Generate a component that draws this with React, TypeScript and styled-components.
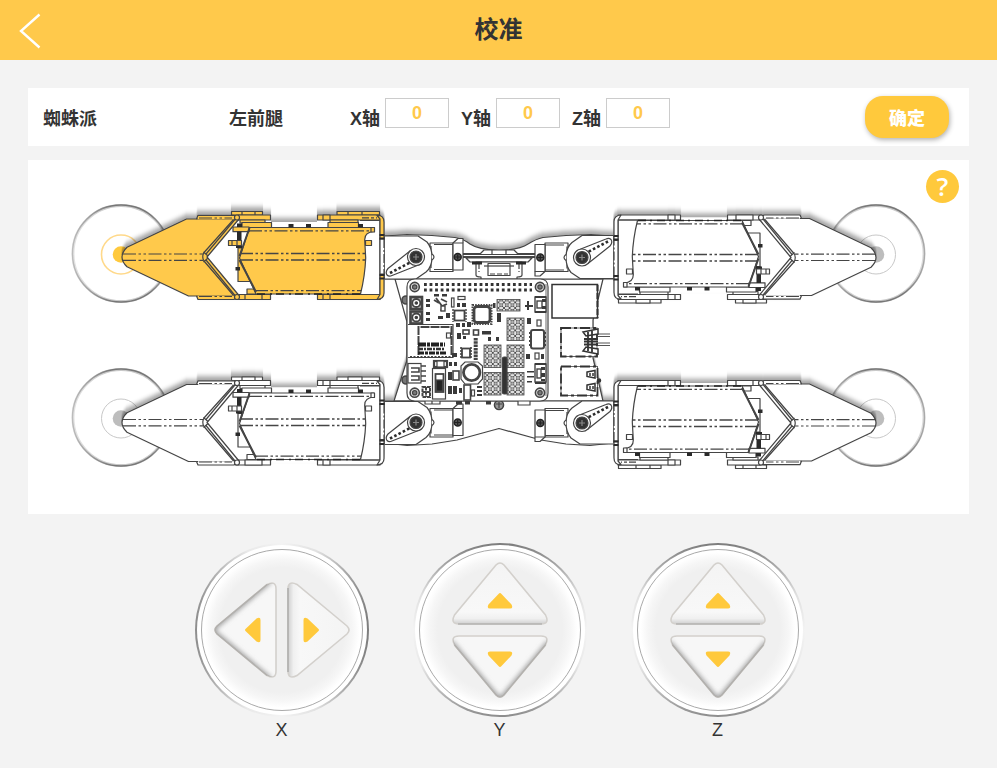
import React, { useState } from "react";
import styled, { createGlobalStyle } from "styled-components";

const YELLOW = "#ffc94b";
const AMBER = "#ffc93c";
const INK = "#444";

const GlobalStyle = createGlobalStyle`
  *, *::before, *::after { box-sizing: border-box; }
  body {
    margin: 0;
    background: #f3f3f3;
    color: #333;
    font-family: "Liberation Sans", "Noto Sans CJK SC", sans-serif;
    font-size: 18px;
  }
  button, input { font: inherit; }
`;

const Header = styled.header`
  display: grid;
  grid-template-columns: 60px 1fr 60px;
  align-items: center;
  height: 60px;
  background: ${YELLOW};
`;

const BackButton = styled.button`
  display: flex;
  align-items: center;
  justify-content: center;
  height: 60px;
  padding: 2px 0 0;
  border: 0;
  background: none;
  cursor: pointer;
`;

const Title = styled.h1`
  margin: 0;
  text-align: center;
  font-size: 24px;
  line-height: 60px;
  font-weight: 700;
`;

const Main = styled.main`
  display: flex;
  flex-direction: column;
  gap: 14px;
  padding: 28px 28px 0;
`;

const Toolbar = styled.form`
  display: flex;
  align-items: center;
  min-height: 58px;
  padding: 0 20px 0 15px;
  background: #fff;
  font-weight: 700;
`;

const DeviceName = styled.span`
  width: 186px;
`;

const LegName = styled.span`
  width: 121px;
`;

const AxisFields = styled.div`
  display: flex;
  flex: 1;
  gap: 12px;
`;

const AxisField = styled.label`
  display: flex;
  align-items: center;
  gap: 5px;
`;

const AxisInput = styled.input`
  width: 64px;
  height: 30px;
  margin-bottom: 8px;
  padding: 0;
  border: 1px solid #ccc;
  background: #fff;
  color: ${YELLOW};
  font-weight: 700;
  text-align: center;
  outline: none;
`;

const ConfirmButton = styled.button`
  width: 84px;
  height: 42px;
  padding: 0;
  border: 0;
  border-radius: 18px;
  background: ${AMBER};
  box-shadow: 1px 2px 5px rgba(0, 0, 0, 0.3);
  color: #fff;
  font-weight: 900;
  cursor: pointer;
`;

const Stage = styled.section`
  position: relative;
  background: #fff;
`;

const Drawing = styled.svg`
  display: block;
  width: 100%;
  height: auto;
`;

const HelpButton = styled.button`
  position: absolute;
  top: 10px;
  right: 10px;
  width: 33px;
  height: 33px;
  padding: 0;
  border: 0;
  border-radius: 50%;
  background: ${AMBER};
  color: #fff;
  font-family: "Open Sans", sans-serif;
  font-size: 26px;
  line-height: 33px;
  font-weight: 600;
  cursor: pointer;
`;

const Pads = styled.section`
  display: flex;
  justify-content: center;
  gap: 44px;
  padding: 15px 0 0 2px;
`;

const Pad = styled.div`
  display: flex;
  flex-direction: column;
  align-items: center;
  line-height: 26px;
`;

const Dial = styled.div<{ $vertical: boolean }>`
  display: flex;
  width: 174px;
  height: 174px;
  padding: 2px;
  border-radius: 50%;
  background: linear-gradient(90deg, #8c8c8c, #e9e9e9 30%, #f3f3f3 50%, #e0e0e0 70%, #7c7c7c);
  transform: rotate(${(p) => (p.$vertical ? -90 : 0)}deg);
`;

const DialRim = styled.div`
  display: flex;
  flex: 1;
  padding: 4px;
  border-radius: 50%;
  background: #fff;
`;

const DialFace = styled.div`
  display: flex;
  flex: 1;
  align-items: center;
  justify-content: center;
  gap: 10px;
  border: 1px solid #aaa;
  border-radius: 50%;
  background: radial-gradient(closest-side, #f0f0f0 78%, #f6f6f6 88%, #fff 97%);
`;

const ArrowButton = styled.button`
  display: flex;
  padding: 0;
  border: 0;
  background: none;
  cursor: pointer;
`;

const DASH = "13 2.5 2.5 2.5 2.5 2.5";

type Box = [number, number, number, number];

const Rects = ({ list, fill, stroke }: { list: Box[]; fill: string; stroke?: string }) => (
  <>
    {list.map(([x, y, w, h]) => (
      <rect key={`${x}-${y}-${w}`} x={x} y={y} width={w} height={h} fill={fill} stroke={stroke ?? "none"} />
    ))}
  </>
);

const Leg = ({ fill }: { fill: string }) => (
  <g stroke={INK} strokeWidth="1.2" fill={fill} strokeLinejoin="round">
    <path d="M207 257L238 217H271V222H317V217H380V297H238Z" fill="#fff" stroke="none" />
    <Rects
      fill={fill}
      stroke={INK}
      list={[
        [231.5, 211.5, 31, 3.5],
        [242, 211.5, 13, 3.5],
        [238, 215, 32.5, 5],
        [240, 220, 25, 3],
        [242, 222.5, 29.5, 5],
        [337, 211.5, 42.5, 3.5],
        [348, 211.5, 14, 3.5],
        [317.5, 215, 62.5, 5],
        [323, 215, 7, 5],
        [330, 220, 28, 3],
        [328, 222.5, 30.5, 5],
        [236, 294.5, 34.5, 5],
        [245, 294.5, 17, 5],
        [317.5, 294.5, 62.5, 5],
        [323, 294.5, 7, 5],
        [365.5, 240.5, 6, 5],
        [238, 248, 12, 33.5],
        [247, 289, 9, 5],
      ]}
    />
    <path d="M360 220.5H380V294.5H352" fill="none" />
    <rect x="380" y="239" width="4" height="35" fill="#fff" stroke="none" />
    <path d="M380 239V274" />
    <path d="M384 239V274" strokeDasharray="9 2 2 2" />
    <path d="M377 215.5Q384 215 384 222V239H380V219Z" />
    <path d="M380 274H384V293Q384 299 377 299.5L380 294.5Z" />
    <path d="M249.5 227.5H374V231.5Q364.5 232 364.7 240L365.7 258Q365 276 360.5 294H256L239.5 258Z" />
    <rect x="371" y="227.5" width="3.5" height="4.5" />
    <rect x="233" y="227" width="16" height="4.7" />
    <path d="M249.5 228L239.5 256M239.5 260L256 292" strokeWidth="2" />
    <g fill="none" strokeWidth="1.3" strokeDasharray={DASH}>
      <path d="M249 230.8H371" />
      <path d="M240 253.5H365.5" />
      <path d="M240 260H365.5" />
      <path d="M255 290.7H361" />
    </g>
    <path d="M257 294H360" stroke="#222" strokeWidth="1.6" strokeDasharray="8 5 2 4" />
    <path d="M362 217.8H377" strokeDasharray="7 2 3 2" />
    <Rects
      fill="#2b2b2b"
      list={[
        [237, 231.5, 4.5, 16.5],
        [236, 245, 6, 3],
        [235.5, 267, 4.5, 3.5],
        [237, 223.5, 5, 3.5],
        [288.5, 224, 5, 3.5],
        [306, 224, 5, 3.5],
        [358, 224, 5, 3.5],
        [379.5, 234, 5, 2],
        [379.5, 237.5, 5, 2],
        [379.5, 274, 5, 2],
        [379.5, 277.5, 5, 2],
      ]}
    />
    <rect x="228.5" y="240.5" width="13" height="5" />
    <path d="M232 240.5V245.5M237 240.5V245.5" />
    <path d="M239 219L207 257L239 295.5L234 299.5H198L196.5 296H188.5L127 266.8Q117 257 127 247.3L186.5 219H196.5L198 215.3H234L239 219Z" />
    <path d="M196.5 219H234L204 252.5Q201.5 257 204 261L234 296H196.5" fill="none" />
    <path d="M237 217L206 254M237 298L206 260M203.5 252L208 256M203.5 262L208 258" fill="none" />
    <path d="M198 218.2H234M198 296.8H234" stroke={fill} strokeWidth="2" />
    <path d="M199 218H232M199 296.5H232M123 254H203M123 260.3H203" strokeDasharray={DASH} />
    <circle cx="237" cy="217.5" r="2.5" />
    <circle cx="237" cy="297" r="2.5" />
  </g>
);

const Shoulder = () => (
  <g stroke={INK} strokeWidth="1.2" fill="#fff" strokeLinejoin="round">
    <path d="M453 243L458 238.5H463V243" />
    <rect x="430" y="243" width="23" height="28.5" />
    <path d="M434 244.5H453M434 269.5H453M431 246V268" fill="none" />
    <rect x="453" y="243" width="10" height="27" />
    <path d="M385 236H418L427 242Q432 248 432 257Q432 267 426 272L416 279H385" />
    <path d="M432 254Q436 257 432 260" />
    <path d="M410 251L388 268.5Q385 272 387 275Q389 277 392 275.5L421 264Z" />
    <circle cx="416" cy="257" r="8.5" />
    <circle cx="416" cy="257" r="6" fill="#333" />
    <path d="M413 257H419M416 254V260" stroke="#888" />
    <path d="M390 273L410 262.5" stroke="#2b2b2b" strokeWidth="2.6" strokeDasharray="2.6 2.2" fill="none" />
    <circle cx="457.7" cy="257" r="3.5" fill="#555" stroke="#222" strokeWidth="1.5" />
    <path d="M455 257H460.5M457.7 254.5V259.5" stroke="#222" />
  </g>
);

const Screw = ({ x, y }: { x: number; y: number }) => (
  <g stroke={INK}>
    <circle cx={x} cy={y} r="4.6" fill="#ddd" strokeWidth="1.6" />
    <circle cx={x} cy={y} r="2.2" fill="#777" />
  </g>
);

const CHIPS: Box[] = [
  [426, 299, 4, 3], [426, 304, 4, 3], [426, 312, 4, 3], [426, 318, 4, 3],
  [434, 294, 5, 2.5], [442, 294, 5, 2.5], [457, 303, 3, 4], [462, 303, 4, 4],
  [438, 316, 5, 3], [446, 313, 4, 5], [456, 323, 4, 4], [462, 323, 3, 4], [467, 322, 4, 5],
  [457, 333, 4, 6], [463, 336, 3, 3], [482, 331, 9, 3.5],
  [488, 337, 3, 4], [496, 337, 3, 4], [452, 353, 5, 4], [449, 362, 3, 4], [454, 362, 3, 4],
  [448, 372, 4, 8], [448, 386, 4, 8], [453, 386, 4, 8], [459, 388, 3, 5], [477, 386, 5, 2], [477, 390, 5, 2], [477, 394, 5, 2],
  [456, 401, 6, 3.5], [465, 401, 5, 3.5], [486, 401, 5, 3.5], [493, 303, 2.5, 5], [497, 313, 4, 9], [527, 318, 4, 6],
  [526, 354, 4, 5], [541, 354, 3, 5], [525, 305, 8, 2], [527, 301, 2, 9], [527, 371, 7, 1.5], [527, 376, 7, 1.5], [527, 381, 5, 1.5],
  [542, 299, 4, 3], [542, 306, 4, 3], [541, 367, 4, 3], [541, 373, 4, 4], [541, 379, 4, 2],
  [535, 296, 11, 2], [535, 311, 11, 2], [535, 363, 11, 2], [535, 382, 11, 2],
  [562, 340, 5, 5],
];

const GRIDS: Box[] = [
  [497, 299.5, 23, 11.5], [507, 318, 17, 22.5], [484, 345, 17, 22.5],
  [507, 345, 17, 22.5], [484, 372.5, 17, 22.5], [507, 372.5, 17, 22.5],
];

const Board = () => (
  <g stroke={INK} strokeWidth="1.2" fill="#fff">
    <circle cx="406" cy="300" r="4" fill="#777" strokeWidth="1.6" />
    <circle cx="406" cy="380" r="4" fill="#777" strokeWidth="1.6" />
    <circle cx="499" cy="405" r="4.5" fill="#999" strokeWidth="1.6" />
    <path d="M496 404H502M499 402V408" />
    <path d="M425 401V404H440V401M432 404V401M518 401V405H530V401" />
    <path d="M415 279H540Q548 279 548 287V393Q548 401 540 401H415Q407 401 407 393V287Q407 279 415 279Z" />
    <path d="M546 284V396" fill="none" strokeWidth="0.8" />
    {[284.5, 290].map((y) => (
      <path key={y} d={`M424 ${y}H532`} stroke="#333" strokeWidth="2.8" strokeDasharray="2.8 2.76" />
    ))}
    <Screw x={414.7} y={287} />
    <Screw x={540} y={287} />
    <Screw x={414.7} y={392.7} />
    <Screw x={540} y={392.7} />

    {[302.5, 317].map((y) => (
      <g key={y}>
        <rect x="410.500" y={y - 5.5} width="11.500" height="12" fill="#ccc" strokeWidth="2.6" />
        <circle cx="416.300" cy={y + 0.5} r="4" strokeWidth="1.8" />
        <circle cx="416.300" cy={y + 0.5} r="1.200" fill="#333" />
      </g>
    ))}

    <path d="M408 324.5H453V357.5H408" />
    <path d="M418.5 355V327H451.500V355" strokeWidth="2" strokeDasharray="9 1" fill="none" />
    <path d="M418 344.5H445" stroke="#222" strokeWidth="4" strokeDasharray="8 1 3 1" />
    <path d="M418 349H445" stroke="#333" strokeWidth="2.4" strokeDasharray="5 1 2 1" />
    <path d="M418 353H446" stroke="#222" strokeWidth="3" strokeDasharray="6 1 3 1" />
    <path d="M410 357H452" strokeDasharray="2 1.5" strokeWidth="2" />
    <rect x="446.5" y="333" width="4" height="5" />

    <rect x="408" y="363.5" width="13" height="19.5" />
    <path d="M411 368H419V372H411M411 376H419V380H411M421 366H426M421 371H426M421 376H426M421 381H426" fill="none" strokeWidth="1.6" />
    <rect x="434" y="361" width="13" height="6" strokeWidth="2.2" />
    <rect x="437" y="361" width="7" height="6" />
    <rect x="432.5" y="368.5" width="13" height="30.5" />
    <rect x="435.5" y="374" width="8" height="18" strokeWidth="1.8" />
    <rect x="436.5" y="380" width="6" height="11" fill="#222" />
    <path d="M422.5 387H430V397H422.5ZM426 387V397M422.5 392H430" strokeWidth="2" strokeDasharray="3.5 0.8" />
    <path d="M465 362H478L482.5 366V379L478 384H465L461 379V366Z" />
    <circle cx="471.7" cy="372.5" r="8.2" strokeWidth="2.8" />
    <rect x="453" y="371" width="6" height="9" strokeWidth="1.6" />
    <rect x="464" y="385" width="6.5" height="15" strokeWidth="1.6" />
    <rect x="471.5" y="390" width="3" height="6" />

    <rect x="454.5" y="310.5" width="10" height="10" strokeWidth="1.8" />
    <path d="M453 309V322M466 309V322" strokeDasharray="2 1" strokeWidth="1.4" />
    <rect x="458" y="296.5" width="7" height="3" />
    <rect x="451.5" y="298" width="2.5" height="9" />
    <path d="M434 300L439 303M441 299L447 302M443 305L441 311M436 298L442 306L447 304" strokeWidth="1.8" />
    <rect x="441" y="306" width="4" height="5" strokeWidth="1.4" />
    <rect x="474" y="306.5" width="16" height="16" rx="3" strokeWidth="2.8" />
    <rect x="472.5" y="305" width="19" height="19" fill="none" strokeWidth="2" strokeDasharray="1.5 1.2" />
    <rect x="462" y="348.5" width="8" height="9" strokeWidth="1.8" />
    <path d="M461 347V359M471 347V359" strokeDasharray="2 1" strokeWidth="1.6" />
    <rect x="463" y="330" width="6" height="4" strokeWidth="1.6" />
    <rect x="473.5" y="330" width="5" height="5" strokeWidth="1.6" />
    <path d="M475.700 338V360" strokeWidth="4" strokeDasharray="2.500 0.800" />

    {GRIDS.map(([x, y, w, h]) => (
      <rect key={`${x}-${y}`} x={x} y={y} width={w} height={h} fill="url(#holes)" strokeWidth="0.8" />
    ))}
    <rect x="502.5" y="357" width="4.5" height="37" rx="1.5" fill="#333" />

    <rect x="535" y="297" width="11" height="15" strokeWidth="1.4" />
    <rect x="537" y="301" width="5" height="7" strokeWidth="1.4" />
    <rect x="535" y="364" width="11" height="18" strokeWidth="1.4" />
    <rect x="537" y="369" width="4" height="9" strokeWidth="1.4" />
    <rect x="531" y="330" width="13" height="18.5" rx="2" strokeWidth="2" />
    <path d="M530 332V347M545 332V347" strokeDasharray="2 2" strokeWidth="2" />
    <rect x="537" y="320" width="4" height="6" />
    <rect x="535" y="353" width="4" height="6" />

    <Rects list={CHIPS} fill="#3a3a3a" />
  </g>
);

const Ports = () => (
  <g stroke="#333" strokeWidth="1.5" fill="#fff">
    <rect x="552" y="284.5" width="45.5" height="33.5" />
    <path d="M597.5 285V318" strokeDasharray="6 2" strokeWidth="2" />
    <rect x="561" y="328" width="36" height="28.5" stroke="#666" strokeWidth="1" />
    <rect x="561" y="328" width="36" height="28.5" fill="none" strokeDasharray="10 3 3 3" strokeWidth="1.8" />
    <rect x="561" y="366.5" width="36.5" height="29" stroke="#666" strokeWidth="1" />
    <rect x="561" y="366.5" width="36.5" height="29" fill="none" strokeDasharray="10 3 3 3" strokeWidth="1.8" />
    <path d="M598 334H610M598 336.5H610M598 343H610M598 345.5H610" stroke="#555" strokeWidth="1" />
    <path d="M583 332L598 329V334L586 336ZM583 351L598 354V349L586 347Z" />
    <path d="M584 339H598M584 341.5H598M584 344.5H598M588 332V351M592 331V352" strokeWidth="1.8" />
    <path d="M587 372L595 370.5V378L587 376.500ZM587 385L595 383.5V391L587 389.500Z" />
    <path d="M590 373V376M593 373V376M590 386V389M593 386V389" />
    <circle cx="599" cy="380.5" r="1.5" fill="#333" />
  </g>
);

const Chassis = () => (
  <g stroke={INK} strokeWidth="1.2" fill="#fff" strokeLinejoin="round">
    <path d="M395 279L407 322V360L394 401H603L593 358V320L603 279Z" />
    <path d="M385 236L407 234.5L432 235.5L455 237.5Q464 239 470 244Q478 249.5 499 250.5Q520 249.5 528 244Q536 239 543 237.5L566 235.5L591 234.5L613 236V279H385Z" />
    <path d="M385 401H613V443L590 445.5L566 444L541 440L499 428.5L457 440L432 444L407 445.5L385 443Z" />
    <path d="M463 254H535M463 257H535" strokeWidth="1.8" />
    <path d="M466 258L470 262H528L532 258Z" />
    <path d="M480 254L484 250H514L518 254M492 254V250M506 254V250" />
    <path d="M476 262V275Q476 277 481 277V279H517V277Q522 277 522 275V262Z" />
    <rect x="488" y="263.5" width="22" height="12" />
    <path d="M479 264V272M519 264V272M490 274H508" strokeDasharray="5 2" />
    <path d="M472 263H482M516 263H526" strokeWidth="3" stroke="#2b2b2b" />
    <path d="M484 266H514" />
  </g>
);

const Wheel = ({ x, y, active }: { x: number; y: number; active?: boolean }) => (
  <g fill="none">
    <circle cx={x} cy={y} r="48" stroke="url(#rim)" strokeWidth="3" opacity="0.4" />
    <circle cx={x} cy={y} r="48.5" stroke="url(#rim)" strokeWidth="1.4" />
    <circle cx={x} cy={y + 1} r="19.5" stroke={active ? "#ffd98a" : "#c8c8c8"} strokeWidth={active ? 1.6 : 1} />
    <circle cx={x} cy={y + 1} r="8.3" fill={active ? AMBER : "#bdbdbd"} />
  </g>
);

const SpiderDrawing = () => (
  <Drawing viewBox="28 160 941 354" role="img">
    <defs>
      <filter id="lift" x="-5%" y="-20%" width="110%" height="130%">
        <feGaussianBlur in="SourceAlpha" stdDeviation="0 2.4" />
        <feOffset dy="-4" result="shade" />
        <feFlood floodColor="#000" floodOpacity="0.36" />
        <feComposite in2="shade" operator="in" result="tint" />
        <feMerge>
          <feMergeNode in="tint" />
          <feMergeNode in="SourceGraphic" />
        </feMerge>
      </filter>
      <linearGradient id="rim">
        <stop offset="0" stopColor="#bbb" />
        <stop offset="0.4" stopColor="#777" />
        <stop offset="0.8" stopColor="#777" />
        <stop offset="1" stopColor="#aaa" />
      </linearGradient>
      <pattern id="holes" width="5.6" height="5.6" patternUnits="userSpaceOnUse">
        <rect width="5.6" height="5.6" fill="#e4e4e4" />
        <path d="M0 0L5.600 5.600M5.600 0L0 5.600" stroke="#444" strokeWidth="0.9" />
        <circle cx="2.8" cy="2.8" r="1.3" fill="#fff" stroke="#444" strokeWidth="0.8" />
      </pattern>
    </defs>
    <Wheel x={121} y={253.5} active />
    <Wheel x={121} y={417.5} />
    <Wheel x={876} y={253.5} />
    <Wheel x={876} y={417.5} />
    <g filter="url(#lift)">
      <Chassis />
    </g>
    {[0, 165.5].map((dy) => (
      <g key={dy} transform={`translate(0 ${dy})`}>
        <Shoulder />
        <g transform="rotate(180 499 257.25)">
          <Shoulder />
        </g>
      </g>
    ))}
    <Board />
    <Ports />
    {[0, 165.5].map((dy) => (
      <g key={dy} transform={`translate(0 ${dy})`}>
        <g filter="url(#lift)">
          <Leg fill={dy === 0 ? YELLOW : "#fff"} />
        </g>
        <g filter="url(#lift)">
          <g transform="rotate(180 499 257.25)">
            <Leg fill="#fff" />
          </g>
        </g>
      </g>
    ))}
  </Drawing>
);

const LEFT_FACE = "M3 45L53 3.5Q62 -1 62 8V90Q62 99 53 94.5L3 53Q-1 49 3 45Z";
const RIGHT_FACE = "M61 45L11 3.5Q2 -1 2 8V90Q2 99 11 94.5L61 53Q65 49 61 45Z";

const LeftArrow = () => (
  <svg width="63" height="98" viewBox="0 0 63 98">
    <defs>
      <clipPath id="leftClip">
        <path d={LEFT_FACE} />
      </clipPath>
      <filter id="soft">
        <feGaussianBlur stdDeviation="2.5" />
      </filter>
    </defs>
    <path d={LEFT_FACE} fill="#f7f7f7" stroke="#d3d0cc" strokeWidth="1.6" />
    <g clipPath="url(#leftClip)">
      <path d="M56 0L0 47V51L56 98" fill="none" stroke="#8d8d8d" strokeWidth="4" filter="url(#soft)" />
    </g>
    <path d="M53 3.5L3 45Q-1 49 3 53L53 94.5" fill="none" stroke="#b3b1ae" strokeWidth="1.2" />
    <path d="M32 47.500L42.500 37.500Q46.500 35.500 46.500 39V59Q46.500 62.500 42.500 60.500L32 50.500Q30 49 32 47.500Z" fill={AMBER} />
  </svg>
);

const RightArrow = () => (
  <svg width="63" height="98" viewBox="1 0 63 98">
    <defs>
      <linearGradient id="rightFace" x1="0" x2="1">
        <stop offset="0" stopColor="#cfcfcf" />
        <stop offset="0.09" stopColor="#f0f0f0" />
        <stop offset="0.2" stopColor="#f8f8f8" />
        <stop offset="1" stopColor="#f4f4f4" />
      </linearGradient>
    </defs>
    <path d={RIGHT_FACE} fill="url(#rightFace)" stroke="#d3d0cc" strokeWidth="1.6" />
    <path d="M2 7V91" stroke="#a3a3a3" strokeWidth="1.2" />
    <path d="M32 47.500L21.500 37.500Q17.500 35.500 17.500 39V59Q17.500 62.500 21.500 60.500L32 50.500Q34 49 32 47.500Z" fill={AMBER} />
  </svg>
);

const AXES = ["X", "Y", "Z"] as const;
type Axis = (typeof AXES)[number];

export default function App() {
  const [values, setValues] = useState<Record<Axis, number>>({ X: 0, Y: 0, Z: 0 });
  const shift = (axis: Axis, step: number) => setValues((v) => ({ ...v, [axis]: v[axis] + step }));

  return (
    <>
      <GlobalStyle />
      <Header>
        <BackButton type="button" aria-label="返回">
          <svg width="22" height="36" viewBox="0 0 22 36" fill="none" stroke="#fff" strokeWidth="2.4">
            <path d="M20.5 1.5L2 18L20.5 34.5" />
          </svg>
        </BackButton>
        <Title>校准</Title>
      </Header>
      <Main>
        <Toolbar onSubmit={(e) => e.preventDefault()}>
          <DeviceName>蜘蛛派</DeviceName>
          <LegName>左前腿</LegName>
          <AxisFields>
            {AXES.map((axis) => (
              <AxisField key={axis}>
                {axis}轴
                <AxisInput
                  value={values[axis]}
                  onChange={(e) => setValues({ ...values, [axis]: Number(e.target.value) || 0 })}
                />
              </AxisField>
            ))}
          </AxisFields>
          <ConfirmButton type="submit">确定</ConfirmButton>
        </Toolbar>
        <Stage>
          <SpiderDrawing />
          <HelpButton type="button">?</HelpButton>
        </Stage>
        <Pads>
          {AXES.map((axis) => (
            <Pad key={axis}>
              <Dial $vertical={axis !== "X"}>
                <DialRim>
                  <DialFace>
                    <ArrowButton type="button" aria-label={`${axis} -`} onClick={() => shift(axis, -1)}>
                      <LeftArrow />
                    </ArrowButton>
                    <ArrowButton type="button" aria-label={`${axis} +`} onClick={() => shift(axis, 1)}>
                      <RightArrow />
                    </ArrowButton>
                  </DialFace>
                </DialRim>
              </Dial>
              {axis}
            </Pad>
          ))}
        </Pads>
      </Main>
    </>
  );
}
